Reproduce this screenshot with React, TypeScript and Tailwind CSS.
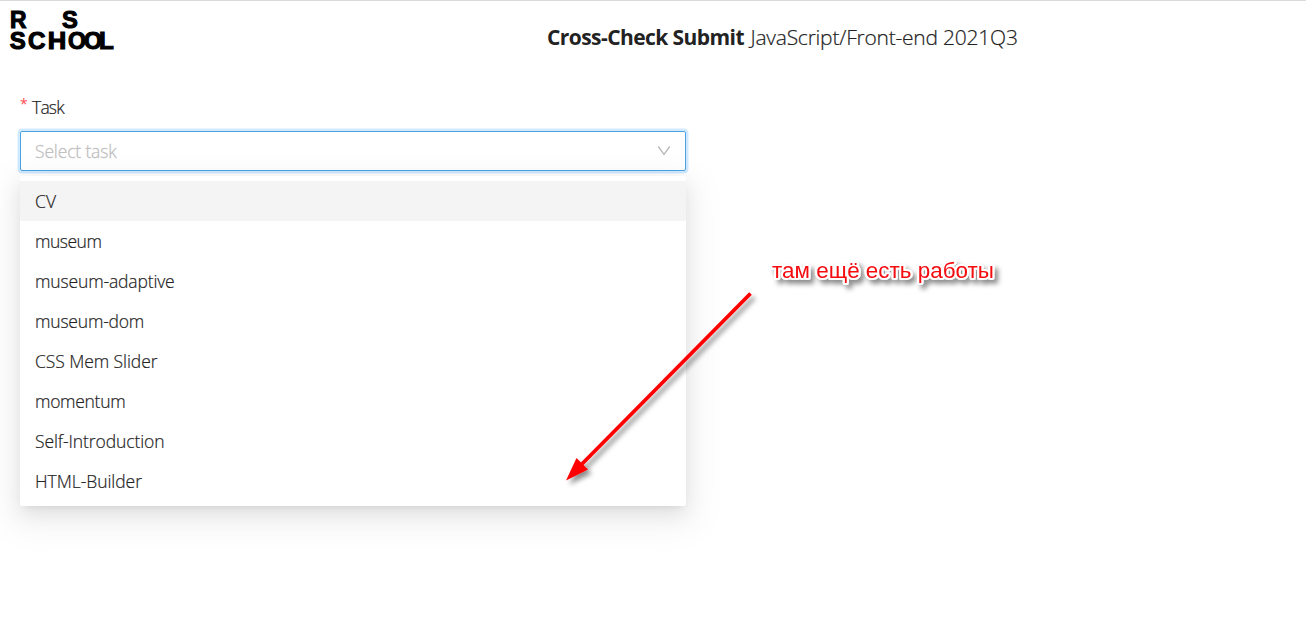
const tasks = [
  { name: 'CV', spacing: 'tracking-[0.2px]' },
  { name: 'museum', spacing: 'tracking-[-0.5px]' },
  { name: 'museum-adaptive', spacing: 'tracking-[-0.15px]' },
  { name: 'museum-dom', spacing: 'tracking-[-0.2px]' },
  { name: 'CSS Mem Slider', spacing: 'tracking-[-0.08px]' },
  { name: 'momentum', spacing: 'tracking-[-0.3px]' },
  { name: 'Self-Introduction', spacing: 'tracking-[-0.1px]' },
  { name: 'HTML-Builder', spacing: 'tracking-[-0.05px]' },
];

function Logo() {
  return (
    <svg
      className="block overflow-visible"
      width="110"
      height="44"
      viewBox="0 0 110 44"
      fontFamily="'Liberation Sans', Arial, sans-serif"
      fontWeight="700"
      fontSize="23.200"
      fill="#000"
      stroke="#000"
      strokeWidth="1.100"
    >
      <text x="1" y="20" textLength="16.500" lengthAdjust="spacingAndGlyphs">R</text>
      <text x="53" y="20" textLength="15.800" lengthAdjust="spacingAndGlyphs">S</text>
      <text x="0.800" y="40.600" textLength="16" lengthAdjust="spacingAndGlyphs">S</text>
      <text x="19" y="40.600" textLength="17.500" lengthAdjust="spacingAndGlyphs">C</text>
      <text x="38.800" y="40.600" textLength="18.500" lengthAdjust="spacingAndGlyphs">H</text>
      <text x="59" y="40.600" textLength="18" lengthAdjust="spacingAndGlyphs">O</text>
      <text x="75" y="40.600" textLength="18" lengthAdjust="spacingAndGlyphs">O</text>
      <text x="90" y="40.600" textLength="14.800" lengthAdjust="spacingAndGlyphs">L</text>
    </svg>
  );
}

function Annotation() {
  return (
    <div className="pointer-events-none absolute inset-0">
      <svg className="absolute inset-0" width="1306" height="630" viewBox="0 0 1306 630">
        <defs>
          <filter id="drop" x="-10%" y="-30%" width="125%" height="180%">
            <feDropShadow dx="3.500" dy="4" stdDeviation="2.800" floodColor="#000" floodOpacity="0.450" />
          </filter>
        </defs>
        <g filter="url(#drop)">
          <path d="M750.500 292.500L580 465" stroke="#f00" strokeWidth="3.800" fill="none" />
          <path d="M566 479.500L576.500 457L588 468.500Z" fill="#f00" />
        </g>
        <text
          x="772"
          y="277"
          textLength="222"
          lengthAdjust="spacingAndGlyphs"
          fontFamily="'Liberation Sans', Arial, sans-serif"
          fontSize="21.300"
          fill="#f40a10"
          stroke="#fff"
          strokeWidth="4"
          strokeLinejoin="round"
          paintOrder="stroke"
          filter="url(#drop)"
        >
          там ещё есть работы
        </text>
      </svg>
    </div>
  );
}

export default function App() {
  return (
    <div className="relative h-[631px] w-[1306px] overflow-hidden border-t border-[#d9d9d9] bg-white font-['Open_Sans','Noto_Sans',sans-serif] text-[#222]">
      <header className="flex h-[75px] items-start pl-[9px] pt-[7px]">
        <Logo />
        <h1 className="ml-[428px] mt-[14px] whitespace-nowrap text-[21px] leading-[31px]">
          <strong className="font-bold tracking-[-0.57px]">Cross-Check Submit</strong>{' '}
          <span className="ml-px font-[350] tracking-[-0.22px] [-webkit-text-stroke:0.2px]">JavaScript/Front-end 2021Q3</span>
        </h1>
      </header>
      <main className="w-[686px] pl-5">
        <label className="flex h-[55px] items-start pt-[17px] text-[17.5px] leading-[28px]">
          <span className="mt-[-1px] w-3 text-[14px] leading-[24px] text-[#ff4d4f]">*</span>
          <span className="font-[350] tracking-[-0.8px] [-webkit-text-stroke:0.2px]">Task</span>
        </label>
        <div className="flex h-10 items-center justify-between rounded-[2px] border border-[#4ba3e3] pl-[14px] pr-[14px] shadow-[0_0_0_2.5px_rgba(24,144,255,0.2)]">
          <span className="pt-px text-[17.5px] font-[350] tracking-[-0.15px] text-[#bfbfbf] [-webkit-text-stroke:0.3px]">Select task</span>
          <svg width="14" height="12" viewBox="0 0 14 12" fill="none" stroke="#b8b8b8" strokeWidth="1.300">
            <path d="M1.300 1.500L7 9.300L12.700 1.500" />
          </svg>
        </div>
        <ul className="mt-[5px] rounded-[2px] bg-white py-[5px] shadow-[0_4px_8px_-5px_rgba(0,0,0,0.12),0_8px_20px_0_rgba(0,0,0,0.08),0_11px_35px_10px_rgba(0,0,0,0.05)]">
          {tasks.map((task, i) => (
            <li
              key={task.name}
              className={`flex h-10 items-center px-[15px] text-[17.5px] font-[350] [-webkit-text-stroke:0.2px] ${task.spacing} ${i === 0 ? 'bg-[#f4f4f4]' : ''}`}
            >
              {task.name}
            </li>
          ))}
        </ul>
      </main>
      <Annotation />
    </div>
  );
}
